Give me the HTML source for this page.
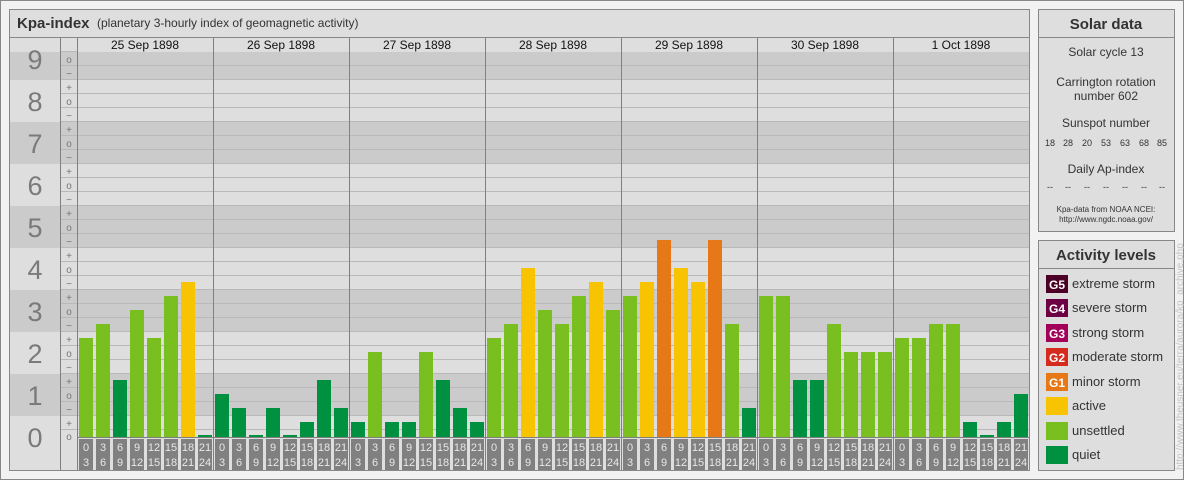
<!DOCTYPE html>
<html><head><meta charset="utf-8"><style>
html,body{margin:0;padding:0;background:#f2f2f2;}
svg{display:block;font-family:"Liberation Sans",Arial,sans-serif;}
</style></head><body>
<svg width="1184" height="480" viewBox="0 0 1184 480" xmlns="http://www.w3.org/2000/svg">
<rect x="0.5" y="0.5" width="1183" height="479" fill="#f2f2f2" stroke="#888"/>
<!-- main panel -->
<rect x="9.5" y="9.5" width="1020" height="461" fill="#dedede" stroke="#888"/>
<line x1="10" y1="37.5" x2="1029" y2="37.5" stroke="#888"/>
<text x="17" y="28" font-size="15" font-weight="bold" fill="#333">Kpa-index</text>
<text x="97" y="27" font-size="12" fill="#333">(planetary 3-hourly index of geomagnetic activity)</text>
<!-- bands -->
<g fill="#cbcbcb">
<rect x="10" y="52" width="1019" height="28"/>
<rect x="10" y="122" width="1019" height="42"/>
<rect x="10" y="206" width="1019" height="42"/>
<rect x="10" y="290" width="1019" height="42"/>
<rect x="10" y="374" width="1019" height="42"/>
</g>
<!-- grid lines -->
<g stroke="#b9b9b9" stroke-width="1">
<path d="M60 65.5H1029M60 79.5H1029M60 93.5H1029M60 107.5H1029M60 121.5H1029M60 135.5H1029M60 149.5H1029M60 163.5H1029M60 177.5H1029M60 191.5H1029M60 205.5H1029M60 219.5H1029M60 233.5H1029M60 247.5H1029M60 261.5H1029M60 275.5H1029M60 289.5H1029M60 303.5H1029M60 317.5H1029M60 331.5H1029M60 345.5H1029M60 359.5H1029M60 373.5H1029M60 387.5H1029M60 401.5H1029M60 415.5H1029M60 429.5H1029"/>
</g>
<!-- header row -->
<rect x="60" y="38" width="969" height="14" fill="#dedede"/>
<line x1="60" y1="51.5" x2="77" y2="51.5" stroke="#b9b9b9"/>
<!-- axis area bg -->
<rect x="60" y="437" width="969" height="33" fill="#dedede"/>
<!-- column lines -->
<g stroke="#808080">
<line x1="60.5" y1="38" x2="60.5" y2="470"/>
<line x1="77.5" y1="38" x2="77.5" y2="470"/>
<line x1="213.5" y1="38" x2="213.5" y2="470"/>
<line x1="349.5" y1="38" x2="349.5" y2="470"/>
<line x1="485.5" y1="38" x2="485.5" y2="470"/>
<line x1="621.5" y1="38" x2="621.5" y2="470"/>
<line x1="757.5" y1="38" x2="757.5" y2="470"/>
<line x1="893.5" y1="38" x2="893.5" y2="470"/>
<line x1="77" y1="437.5" x2="1029" y2="437.5"/>
</g>
<!-- dates -->
<g font-size="12" fill="#111" text-anchor="middle">
<text x="145" y="49">25 Sep 1898</text>
<text x="281" y="49">26 Sep 1898</text>
<text x="417" y="49">27 Sep 1898</text>
<text x="553" y="49">28 Sep 1898</text>
<text x="689" y="49">29 Sep 1898</text>
<text x="825" y="49">30 Sep 1898</text>
<text x="961" y="49">1 Oct 1898</text>
</g>
<!-- big numbers -->
<g font-size="27" fill="#7a7a7a" text-anchor="middle">
<text x="35" y="69">9</text>
<text x="35" y="111">8</text>
<text x="35" y="153">7</text>
<text x="35" y="195">6</text>
<text x="35" y="237">5</text>
<text x="35" y="279">4</text>
<text x="35" y="321">3</text>
<text x="35" y="363">2</text>
<text x="35" y="405">1</text>
<text x="35" y="447">0</text>
</g>
<!-- signs -->
<g font-size="10" fill="#777" text-anchor="middle">
<text x="69" y="63">o</text><text x="69" y="77">−</text>
<text x="69" y="91">+</text><text x="69" y="105">o</text><text x="69" y="119">−</text>
<text x="69" y="133">+</text><text x="69" y="147">o</text><text x="69" y="161">−</text>
<text x="69" y="175">+</text><text x="69" y="189">o</text><text x="69" y="203">−</text>
<text x="69" y="217">+</text><text x="69" y="231">o</text><text x="69" y="245">−</text>
<text x="69" y="259">+</text><text x="69" y="273">o</text><text x="69" y="287">−</text>
<text x="69" y="301">+</text><text x="69" y="315">o</text><text x="69" y="329">−</text>
<text x="69" y="343">+</text><text x="69" y="357">o</text><text x="69" y="371">−</text>
<text x="69" y="385">+</text><text x="69" y="399">o</text><text x="69" y="413">−</text>
<text x="69" y="427">+</text><text x="69" y="440">o</text>
</g>
<!-- bars -->
<g>
<rect x="79" y="338" width="14" height="99" fill="#78bf1f"/>
<rect x="96" y="324" width="14" height="113" fill="#78bf1f"/>
<rect x="113" y="380" width="14" height="57" fill="#009140"/>
<rect x="130" y="310" width="14" height="127" fill="#78bf1f"/>
<rect x="147" y="338" width="14" height="99" fill="#78bf1f"/>
<rect x="164" y="296" width="14" height="141" fill="#78bf1f"/>
<rect x="181" y="282" width="14" height="155" fill="#f8c300"/>
<rect x="198" y="435" width="14" height="2" fill="#009140"/>

<rect x="215" y="394" width="14" height="43" fill="#009140"/>
<rect x="232" y="408" width="14" height="29" fill="#009140"/>
<rect x="249" y="435" width="14" height="2" fill="#009140"/>
<rect x="266" y="408" width="14" height="29" fill="#009140"/>
<rect x="283" y="435" width="14" height="2" fill="#009140"/>
<rect x="300" y="422" width="14" height="15" fill="#009140"/>
<rect x="317" y="380" width="14" height="57" fill="#009140"/>
<rect x="334" y="408" width="14" height="29" fill="#009140"/>

<rect x="351" y="422" width="14" height="15" fill="#009140"/>
<rect x="368" y="352" width="14" height="85" fill="#78bf1f"/>
<rect x="385" y="422" width="14" height="15" fill="#009140"/>
<rect x="402" y="422" width="14" height="15" fill="#009140"/>
<rect x="419" y="352" width="14" height="85" fill="#78bf1f"/>
<rect x="436" y="380" width="14" height="57" fill="#009140"/>
<rect x="453" y="408" width="14" height="29" fill="#009140"/>
<rect x="470" y="422" width="14" height="15" fill="#009140"/>

<rect x="487" y="338" width="14" height="99" fill="#78bf1f"/>
<rect x="504" y="324" width="14" height="113" fill="#78bf1f"/>
<rect x="521" y="268" width="14" height="169" fill="#f8c300"/>
<rect x="538" y="310" width="14" height="127" fill="#78bf1f"/>
<rect x="555" y="324" width="14" height="113" fill="#78bf1f"/>
<rect x="572" y="296" width="14" height="141" fill="#78bf1f"/>
<rect x="589" y="282" width="14" height="155" fill="#f8c300"/>
<rect x="606" y="310" width="14" height="127" fill="#78bf1f"/>

<rect x="623" y="296" width="14" height="141" fill="#78bf1f"/>
<rect x="640" y="282" width="14" height="155" fill="#f8c300"/>
<rect x="657" y="240" width="14" height="197" fill="#e67817"/>
<rect x="674" y="268" width="14" height="169" fill="#f8c300"/>
<rect x="691" y="282" width="14" height="155" fill="#f8c300"/>
<rect x="708" y="240" width="14" height="197" fill="#e67817"/>
<rect x="725" y="324" width="14" height="113" fill="#78bf1f"/>
<rect x="742" y="408" width="14" height="29" fill="#009140"/>

<rect x="759" y="296" width="14" height="141" fill="#78bf1f"/>
<rect x="776" y="296" width="14" height="141" fill="#78bf1f"/>
<rect x="793" y="380" width="14" height="57" fill="#009140"/>
<rect x="810" y="380" width="14" height="57" fill="#009140"/>
<rect x="827" y="324" width="14" height="113" fill="#78bf1f"/>
<rect x="844" y="352" width="14" height="85" fill="#78bf1f"/>
<rect x="861" y="352" width="14" height="85" fill="#78bf1f"/>
<rect x="878" y="352" width="14" height="85" fill="#78bf1f"/>

<rect x="895" y="338" width="14" height="99" fill="#78bf1f"/>
<rect x="912" y="338" width="14" height="99" fill="#78bf1f"/>
<rect x="929" y="324" width="14" height="113" fill="#78bf1f"/>
<rect x="946" y="324" width="14" height="113" fill="#78bf1f"/>
<rect x="963" y="422" width="14" height="15" fill="#009140"/>
<rect x="980" y="435" width="14" height="2" fill="#009140"/>
<rect x="997" y="422" width="14" height="15" fill="#009140"/>
<rect x="1014" y="394" width="14" height="43" fill="#009140"/>
</g>
<!-- axis boxes -->
<defs>
<g id="ax">
<rect x="79" y="439" width="14" height="31" fill="#808080"/>
<rect x="96" y="439" width="14" height="31" fill="#808080"/>
<rect x="113" y="439" width="14" height="31" fill="#808080"/>
<rect x="130" y="439" width="14" height="31" fill="#808080"/>
<rect x="147" y="439" width="14" height="31" fill="#808080"/>
<rect x="164" y="439" width="14" height="31" fill="#808080"/>
<rect x="181" y="439" width="14" height="31" fill="#808080"/>
<rect x="198" y="439" width="14" height="31" fill="#808080"/>
</g>
</defs>
<use href="#ax"/><use href="#ax" x="136"/><use href="#ax" x="272"/><use href="#ax" x="408"/><use href="#ax" x="544"/><use href="#ax" x="680"/><use href="#ax" x="816"/>
<g font-size="11" fill="#e8e8e8" text-anchor="middle">
<text y="451"><tspan x="86">0</tspan><tspan x="103">3</tspan><tspan x="120">6</tspan><tspan x="137">9</tspan><tspan x="154">12</tspan><tspan x="171">15</tspan><tspan x="188">18</tspan><tspan x="205">21</tspan><tspan x="222">0</tspan><tspan x="239">3</tspan><tspan x="256">6</tspan><tspan x="273">9</tspan><tspan x="290">12</tspan><tspan x="307">15</tspan><tspan x="324">18</tspan><tspan x="341">21</tspan><tspan x="358">0</tspan><tspan x="375">3</tspan><tspan x="392">6</tspan><tspan x="409">9</tspan><tspan x="426">12</tspan><tspan x="443">15</tspan><tspan x="460">18</tspan><tspan x="477">21</tspan><tspan x="494">0</tspan><tspan x="511">3</tspan><tspan x="528">6</tspan><tspan x="545">9</tspan><tspan x="562">12</tspan><tspan x="579">15</tspan><tspan x="596">18</tspan><tspan x="613">21</tspan><tspan x="630">0</tspan><tspan x="647">3</tspan><tspan x="664">6</tspan><tspan x="681">9</tspan><tspan x="698">12</tspan><tspan x="715">15</tspan><tspan x="732">18</tspan><tspan x="749">21</tspan><tspan x="766">0</tspan><tspan x="783">3</tspan><tspan x="800">6</tspan><tspan x="817">9</tspan><tspan x="834">12</tspan><tspan x="851">15</tspan><tspan x="868">18</tspan><tspan x="885">21</tspan><tspan x="902">0</tspan><tspan x="919">3</tspan><tspan x="936">6</tspan><tspan x="953">9</tspan><tspan x="970">12</tspan><tspan x="987">15</tspan><tspan x="1004">18</tspan><tspan x="1021">21</tspan></text>
<text y="466"><tspan x="86">3</tspan><tspan x="103">6</tspan><tspan x="120">9</tspan><tspan x="137">12</tspan><tspan x="154">15</tspan><tspan x="171">18</tspan><tspan x="188">21</tspan><tspan x="205">24</tspan><tspan x="222">3</tspan><tspan x="239">6</tspan><tspan x="256">9</tspan><tspan x="273">12</tspan><tspan x="290">15</tspan><tspan x="307">18</tspan><tspan x="324">21</tspan><tspan x="341">24</tspan><tspan x="358">3</tspan><tspan x="375">6</tspan><tspan x="392">9</tspan><tspan x="409">12</tspan><tspan x="426">15</tspan><tspan x="443">18</tspan><tspan x="460">21</tspan><tspan x="477">24</tspan><tspan x="494">3</tspan><tspan x="511">6</tspan><tspan x="528">9</tspan><tspan x="545">12</tspan><tspan x="562">15</tspan><tspan x="579">18</tspan><tspan x="596">21</tspan><tspan x="613">24</tspan><tspan x="630">3</tspan><tspan x="647">6</tspan><tspan x="664">9</tspan><tspan x="681">12</tspan><tspan x="698">15</tspan><tspan x="715">18</tspan><tspan x="732">21</tspan><tspan x="749">24</tspan><tspan x="766">3</tspan><tspan x="783">6</tspan><tspan x="800">9</tspan><tspan x="817">12</tspan><tspan x="834">15</tspan><tspan x="851">18</tspan><tspan x="868">21</tspan><tspan x="885">24</tspan><tspan x="902">3</tspan><tspan x="919">6</tspan><tspan x="936">9</tspan><tspan x="953">12</tspan><tspan x="970">15</tspan><tspan x="987">18</tspan><tspan x="1004">21</tspan><tspan x="1021">24</tspan></text>
</g>
<!-- re-stroke main panel border -->
<rect x="9.5" y="9.5" width="1020" height="461" fill="none" stroke="#888"/>

<!-- Solar data -->
<rect x="1038.5" y="9.5" width="136" height="222" fill="#dedede" stroke="#888"/>
<line x1="1039" y1="37.5" x2="1174" y2="37.5" stroke="#888"/>
<g text-anchor="middle" fill="#333">
<text x="1106" y="29" font-size="15" font-weight="bold">Solar data</text>
<text x="1106" y="56" font-size="12">Solar cycle 13</text>
<text x="1106" y="86" font-size="12">Carrington rotation</text>
<text x="1106" y="100" font-size="12">number 602</text>
<text x="1106" y="127" font-size="12">Sunspot number</text>
<g font-size="9"><text x="1050" y="146">18</text><text x="1068" y="146">28</text><text x="1087" y="146">20</text><text x="1106" y="146">53</text><text x="1125" y="146">63</text><text x="1144" y="146">68</text><text x="1162" y="146">85</text></g>
<text x="1106" y="173" font-size="12">Daily Ap-index</text>
<g font-size="9"><text x="1050" y="190">--</text><text x="1068" y="190">--</text><text x="1087" y="190">--</text><text x="1106" y="190">--</text><text x="1125" y="190">--</text><text x="1144" y="190">--</text><text x="1162" y="190">--</text></g>
<text x="1106" y="212" font-size="8">Kpa-data from NOAA NCEI:</text>
<text x="1106" y="222" font-size="8">http://www.ngdc.noaa.gov/</text>
</g>

<!-- Activity levels -->
<rect x="1038.5" y="240.5" width="136" height="230" fill="#dedede" stroke="#888"/>
<line x1="1039" y1="268.5" x2="1174" y2="268.5" stroke="#888"/>
<text x="1106" y="260" font-size="15" font-weight="bold" fill="#333" text-anchor="middle">Activity levels</text>
<g>
<rect x="1046" y="275" width="22" height="18" fill="#4d0026"/>
<rect x="1046" y="299" width="22" height="18" fill="#6d0042"/>
<rect x="1046" y="324" width="22" height="18" fill="#a3005a"/>
<rect x="1046" y="348" width="22" height="18" fill="#d42b1e"/>
<rect x="1046" y="373" width="22" height="18" fill="#e67817"/>
<rect x="1046" y="397" width="22" height="18" fill="#f8c300"/>
<rect x="1046" y="422" width="22" height="18" fill="#78bf1f"/>
<rect x="1046" y="446" width="22" height="18" fill="#009140"/>
</g>
<g font-size="12" font-weight="bold" fill="#fff" text-anchor="middle">
<text x="1057" y="289">G5</text><text x="1057" y="313">G4</text><text x="1057" y="338">G3</text><text x="1057" y="362">G2</text><text x="1057" y="387">G1</text>
</g>
<g font-size="13" fill="#333">
<text x="1072" y="288">extreme storm</text>
<text x="1072" y="312">severe storm</text>
<text x="1072" y="337">strong storm</text>
<text x="1072" y="361">moderate storm</text>
<text x="1072" y="386">minor storm</text>
<text x="1072" y="410">active</text>
<text x="1072" y="435">unsettled</text>
<text x="1072" y="459">quiet</text>
</g>
<text transform="translate(1183,470) rotate(-90)" font-size="10" fill="#c4c4c4">http://www.theusner.eu/terra/aurora/kp_archive.php</text>
</svg>
</body></html>
